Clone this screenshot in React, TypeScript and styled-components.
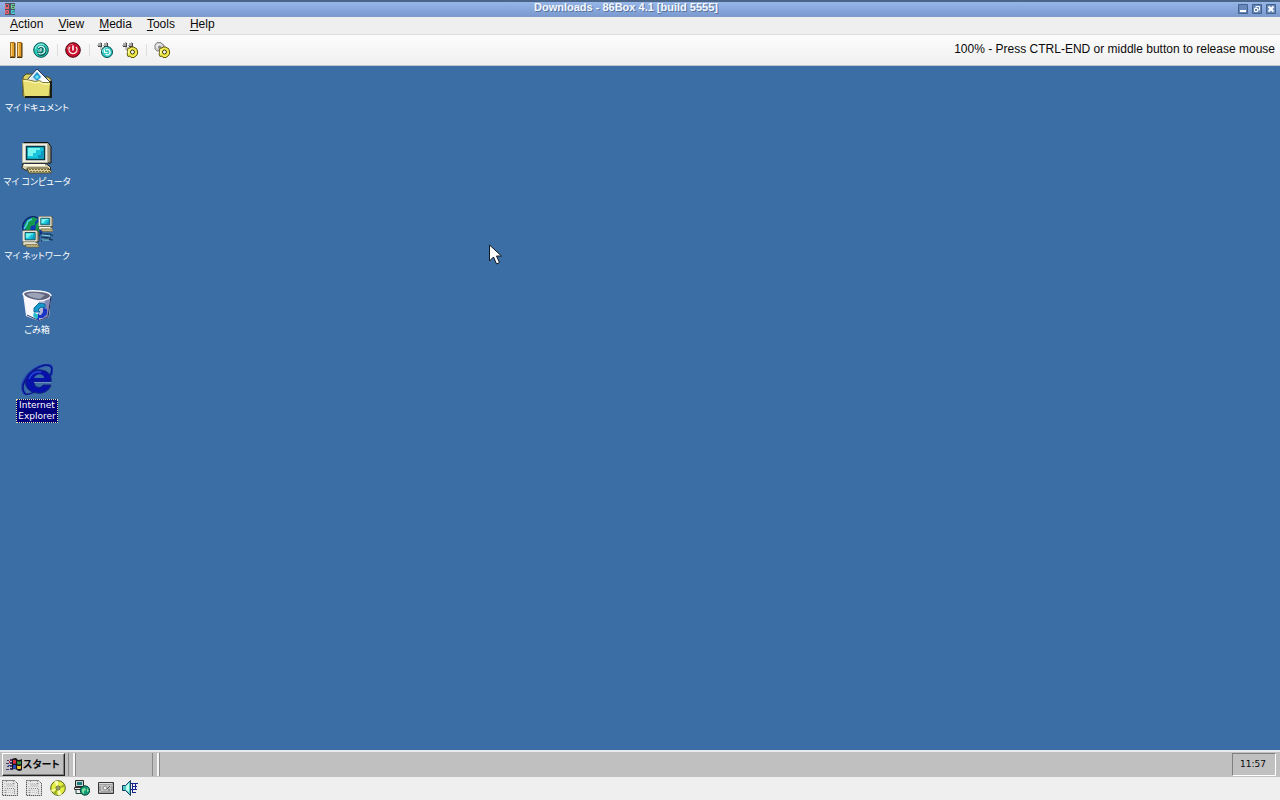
import React from "react";
import styled, { createGlobalStyle, css } from "styled-components";

const Global = createGlobalStyle`
  * { box-sizing: border-box; }
  body { margin: 0; font-family: "Liberation Sans", Arial, sans-serif; font-size: 12px; color: #0a0a0a; }
  button { font: inherit; color: inherit; border: 0; padding: 0; background: none; }
  svg { display: block; flex: none; }
`;

const jpFont = css`
  font-family: "Noto Sans CJK JP", sans-serif;
  font-feature-settings: "palt";
`;

const Page = styled.div`
  min-height: 100vh;
  display: flex;
  flex-direction: column;
  background: #efefef;
`;

const TitleBar = styled.header`
  height: 17px;
  display: grid;
  grid-template-columns: 48px 1fr 48px;
  align-items: center;
  padding: 0 4px;
  border-top: 2px solid #4a6588;
  border-bottom: 1px solid #7d9cc8;
  background: linear-gradient(#96b6e8, #7b9bd0);
`;

const Title = styled.h1`
  margin: 0;
  padding: 0 28px 3px 0;
  text-align: center;
  font-size: 11px;
  line-height: 11px;
  font-weight: bold;
  color: #f4f8ff;
  text-shadow: 1px 1px 0 #5873a0;
`;

const WindowButtons = styled.div`
  display: flex;
  justify-content: flex-end;
  gap: 4px;
`;

const WindowButton = styled.button`
  width: 10px;
  height: 10px;
`;

const MenuBar = styled.nav`
  height: 17px;
  display: flex;
  align-items: flex-start;
  gap: 15px;
  padding: 0 10px;
  background: #efefef;
`;

const MenuButton = styled.button`
  font-size: 12px;
  line-height: 14px;
  u { text-underline-offset: 2px; text-decoration-thickness: 1px; }
`;

const Toolbar = styled.div`
  height: 32px;
  display: flex;
  align-items: center;
  padding: 0 5px 0 8px;
  border-top: 1px solid #dcdcdc;
  border-bottom: 1px solid #c4c8cc;
  background: linear-gradient(#fcfcfc, #f0f0f0);
`;

const ToolGroup = styled.div`
  display: flex;
  gap: 9px;
`;

const ToolDivider = styled.span`
  width: 1px;
  height: 12px;
  margin: 0 7px 0 8px;
  background: #dedede;
`;

const IconButton = styled.button`
  width: 16px;
  height: 16px;
`;

const Hint = styled.span`
  margin-left: auto;
  padding-bottom: 2px;
  line-height: 14px;
`;

const Desktop = styled.main`
  flex: 1;
  position: relative;
  background: #3a6ea5;
`;

const IconColumn = styled.div`
  width: 74px;
  display: flex;
  flex-direction: column;
  gap: 14px;
  padding-top: 2px;
`;

const DesktopItem = styled.button`
  min-height: 60px;
  display: flex;
  flex-direction: column;
  align-items: center;
`;

const ItemLabel = styled.span<{ $selected?: boolean }>`
  ${jpFont}
  margin-top: 2px;
  font-size: 9px;
  line-height: 12px;
  color: #fff;
  white-space: nowrap;
  ${(p) => p.$selected && css`
    font-family: "DejaVu Sans", sans-serif;
    margin-top: 3px;
    line-height: 11px;
    padding: 0 1px;
    border: 1px dotted #e8e8a0;
    background: #00007c;
  `}
`;

const Pointer = styled.svg`
  position: absolute;
  left: 488px;
  top: 178px;
`;

const Taskbar = styled.footer`
  height: 27px;
  display: flex;
  align-items: stretch;
  padding: 1px 4px 1px 2px;
  border-top: 2px solid #e6eaee;
  background: #c0c0c0;
`;

const StartButton = styled.button`
  ${jpFont}
  width: 63px;
  display: flex;
  align-items: center;
  gap: 1px;
  padding: 0 0 2px 3px;
  font-size: 10px;
  line-height: 14px;
  font-weight: bold;
  border: 1px solid;
  border-color: #fff #222 #222 #fff;
  box-shadow: inset -1px -1px 0 #808080;
`;

const Grip = styled.span<{ $wide?: boolean }>`
  width: 7px;
  margin-left: ${(p) => (p.$wide ? "77px" : "3px")};
  border-left: 1px solid #8a8a8a;
  border-right: 2px solid #f6f6f6;
  box-shadow: 1px 0 0 #8a8a8a;
`;

const Clock = styled.time`
  width: 44px;
  margin-left: auto;
  padding-right: 2px;
  text-align: center;
  font-family: "DejaVu Sans", sans-serif;
  font-size: 9px;
  line-height: 21px;
  border: 1px solid;
  border-color: #808080 #fff #fff #808080;
`;

const StatusBar = styled.div`
  height: 23px;
  display: flex;
  gap: 8px;
  padding: 3px 2px 0;
`;

type Box = { children: React.ReactNode; size?: number };
const Svg = ({ children, size = 16 }: Box) => (
  <svg width={size} height={size} viewBox={`0 0 ${size} ${size}`} aria-hidden="true">{children}</svg>
);

const Logo = () => (
  <svg width="12" height="12" viewBox="0 0 12 12" aria-hidden="true">
    <path d="M1 0h10v12H1z" fill="#4a5568" />
    <g fill="none" strokeWidth="1">
      <path d="M1.500 1.500h3v3h-3zM1.500 5.500h3M4.500 4v2M1.500 4v2" stroke="#f0606c" />
      <path d="M10.500 1.500h-3v4h3v-2h-3" stroke="#6fd08b" />
      <path d="M1.500 7.500h3v3h-3zM1.500 9h3" stroke="#f0606c" />
      <path d="M10.500 7.500h-3v3h3V9h-3" stroke="#46d0dc" />
    </g>
  </svg>
);

const WinGlyph = ({ kind }: { kind: "min" | "max" | "close" }) => (
  <Svg size={10}>
    <path d="M.5.5h9v9h-9z" fill="#6687ba" stroke="#45628f" />
    {kind === "min" && <path d="M2 6h6v2H2z" fill="#fff" />}
    {kind === "max" && <path d="M4 4V2.5h3.500V6H6M2.500 4.500h3v3h-3z" fill="none" stroke="#fff" />}
    {kind === "close" && <path d="M2.500 2.500l5 5m0-5l-5 5" stroke="#fff" strokeWidth="2" />}
  </Svg>
);

const PauseIcon = () => (
  <Svg>
    <path d="M2.500.500h4v14h-4zM9.500.500h4v14h-4z" fill="#e3a12b" stroke="#a06c18" />
    <path d="M3.500 1v13M10.500 1v13" stroke="#f8cf70" />
    <path d="M2 15.500h5V1M9 15.500h5V1" fill="none" stroke="#4a3208" />
  </Svg>
);

const ResetIcon = () => (
  <Svg>
    <circle cx="8" cy="8" r="7.300" fill="#2ccabc" stroke="#08524e" />
    <path d="M2.500 7A5.500 5.500 0 0 1 11 3" fill="none" stroke="#a4f8ee" />
    <path d="M5 6.500a4 4 0 1 1 .500 5M4 9.500h4.500V6" fill="none" stroke="#075b55" strokeWidth="2.500" />
    <path d="M5 6a3.800 3.800 0 1 1 .500 5M4.500 9h3.500V6" fill="none" stroke="#d8fff8" strokeWidth="1.200" />
  </Svg>
);

const PowerIcon = () => (
  <Svg>
    <circle cx="8" cy="8" r="7.300" fill="#c70e2c" stroke="#4b0610" />
    <path d="M2.500 7A5.700 5.700 0 0 1 8 2.300" fill="none" stroke="#ef6074" />
    <path d="M5 5a4 4 0 1 0 6 0" fill="none" stroke="#ffe5e5" strokeWidth="1.400" />
    <path d="M8 3.500v5" stroke="#fff" strokeWidth="1.600" />
  </Svg>
);

const Keys = () => (
  <g>
    <path d="M1 1h4v4H1zM7 1h4v4H7z" fill="#444" />
    <path d="M0 0h4v4H0zM6 0h4v4H6z" fill="#a8a8a8" />
    <path d="M0 0h3v1H1v2H0zM6 0h3v1H7v2H6z" fill="#fff" />
    <path d="M3 5h4v3H3z" fill="#c4c4c4" />
  </g>
);

const CadIcon = () => (
  <Svg>
    <Keys />
    <circle cx="10" cy="10" r="5.500" fill="#30c8c4" stroke="#064f50" />
    <path d="M5.500 10A4.500 4.500 0 0 1 10 5.500" fill="none" stroke="#aaf6f0" />
    <path d="M7.500 7.500v3h3M8.500 12a2.600 2.600 0 1 0 .500-4" fill="none" stroke="#f0ffff" strokeWidth="1.200" />
  </Svg>
);

const Gear = () => (
  <>
    <path d="M9 5h3l1 1 1.500.500L15.500 9v3L14 14l-2 1.500H9L8 14l-2 .5L5 12l1-2-1-2 1.500-2H8z" fill="#f0e848" stroke="#5f5912" />
    <path d="M6.500 12V9L9 6.500" fill="none" stroke="#ffffb0" />
    <circle cx="10.500" cy="10" r="2" fill="#f8f8f0" stroke="#3b390c" />
  </>
);

const CaeIcon = () => (
  <Svg><Keys /><Gear /></Svg>
);

const SettingsIcon = () => (
  <Svg>
    <path d="M3 .500h4l1 1.500 2 1v4L8 9H3L1 7V3z" fill="#d0d0d0" stroke="#848484" />
    <path d="M3 6V3h4" fill="none" stroke="#fff" />
    <circle cx="5.500" cy="5" r="1.500" fill="#888" />
    <Gear />
  </Svg>
);

const FolderIcon = () => (
  <Svg size={32}>
    <path d="M2 28V9l3-3h8l2 3h12l3 2v17z" fill="#d9cf62" stroke="#4b481d" />
    <path d="M6 12L16 1l13 13-4 5H6z" fill="#f8fbff" stroke="#253856" />
    <path d="M9 11l7-8 5 6-7 5z" fill="#d2e6f4" />
    <path d="M16 4l4 5-4 4-4-4z" fill="#2292d0" />
    <path d="M14 8l3-1 1 3-3 1z" fill="#65e8ef" />
    <path d="M1.500 11.500h4l9 2 4-1 3 2h8L28 29H3z" fill="#e8df72" stroke="#817833" />
    <path d="M2.500 13h4l8 2 4-1 3 2h7" fill="none" stroke="#ffffc8" />
    <path d="M30 13v16H4" fill="none" stroke="#1b1c13" strokeWidth="2" />
  </Svg>
);

const Monitor = () => (
  <>
    <path d="M3 .500h24l3 4V21H4z" fill="#9b947c" stroke="#111" />
    <path d="M1.500 1.500h25v19h-25z" fill="#f1eee3" stroke="#b4b09e" />
    <path d="M5.500 4.500h18v13h-18z" fill="#18c4dc" stroke="#073940" strokeWidth="1.500" />
    <path d="M7 6h12v2h-4v3h-3v3H7z" fill="#76f4f0" />
    <path d="M17 16v-3h3v-4h2v7z" fill="#1096c4" />
    <path d="M1.500 22h24l4 3v3H4l-3-2z" fill="#d4cfb0" stroke="#27251a" />
    <path d="M3 23h21" stroke="#fffbe2" strokeWidth="2" />
    <path d="M6 26h21l4 4-3 1H8z" fill="#dacf9b" stroke="#514a2c" />
    <path d="M8 27.500h20M9 29.500h20" stroke="#746c42" strokeDasharray="2 1" />
  </>
);

const ComputerIcon = () => <Svg size={32}><Monitor /></Svg>;

const NetworkIcon = () => (
  <Svg size={32}>
    <circle cx="12" cy="11" r="10.500" fill="#1338b4" stroke="#0a2158" />
    <path d="M3 9l3-5 6-3 5 2-3 3v3l-4 1-1 5-3 1-2-4zM15 8l4-3 2 6-3 3 1 5-5-2z" fill="#14984c" />
    <path d="M3 13l3-5 1-3 4-2" fill="none" stroke="#4fcfe8" strokeWidth="1.500" />
    <path d="M21 18h8l3 2M20 21l10 1M20 25l5-2 7 1" fill="none" stroke="#102b48" />
    <path d="M21 19l8 1M21 24h7" stroke="#83d6de" />
    <g transform="translate(17 0) scale(.5)"><Monitor /></g>
    <g transform="translate(1 14) scale(.56)"><Monitor /></g>
  </Svg>
);

const TrashIcon = () => (
  <Svg size={32}>
    <path d="M2 4l3 22 13 5 10-4 2-21L15 11z" fill="#eeeef6" />
    <path d="M3 5l3 20 12 5V11z" fill="#f8f8fc" />
    <path d="M18 11l11-4-2 20-9 4z" fill="#b3b6d0" />
    <path d="M24 9l5-2-2 20-4 2z" fill="#858bb6" />
    <path d="M6 25l12 5.500 9-3.500" fill="none" stroke="#39406f" />
    <path d="M2 4Q4 0 16 1q14 1 14 5-2 4-12 5Q4 9 2 4z" fill="#60657d" stroke="#fafaff" strokeWidth="1.500" />
    <path d="M5 4q6-2 12-1l7 2-5 4Q9 8 5 4z" fill="#9ba1b6" />
    <path d="M30 6l-3 21" fill="none" stroke="#1f2550" />
    <path d="M13 18l5-5 6 1v4l-4-1-3 3 2 2h-6z" fill="#159bcb" stroke="#12659a" />
    <path d="M22 18l4 1v5l-4 4h-4v3l-4-4 4-4v2h2l2-3z" fill="#1c35c4" />
    <path d="M13 22l-1 4 3 3 2-1v-3z" fill="#29bdc6" />
  </Svg>
);

const ExplorerIcon = () => (
  <Svg size={32}>
    <path d="M4 30C-4 20 9 4 24 1c8-1 9 5 5 11" fill="none" stroke="#254bbb" strokeWidth="3" />
    <path d="M4 30C-3 21 10 4 24 1c8-1 8 5 5 11M4 30c5 1 10-2 14-5" fill="none" stroke="#07148a" strokeWidth="1.500" />
    <path d="M30 21C28 27 22 30 16 29 7 28 3 22 5 15 7 8 13 5 20 6c8 1 11 6 10 12H13c0 6 7 7 9 3z" fill="#0712a9" stroke="#14247d" />
    <path d="M13 14h10c0-5-8-5-10 0z" fill="#3a6ea5" />
    <path d="M13 18.500h17" stroke="#738bc1" />
    <path d="M8 15c2-5 6-8 12-7" fill="none" stroke="#2849d1" strokeWidth="1.500" />
  </Svg>
);

const WindowsFlag = () => (
  <svg width="16" height="14" viewBox="0 0 16 14" aria-hidden="true">
    <path d="M6 2q4-2 5 0t5 0v11q-3 2-5 0t-5 0z" fill="#141414" />
    <path d="M7 3q3-1 3 1v3q-1-1-3 0z" fill="#d72e42" />
    <path d="M11 4q2 1 4 0v3q-2 1-4 0z" fill="#369440" />
    <path d="M7 8q3-1 3 1v3q-1-1-3 0z" fill="#2b4dba" />
    <path d="M11 8.500q2 1 4 0v3q-2 1-4 0z" fill="#eac237" />
    <path d="M1 3h2v1H1zM4 2h2v2H4zM0 6h3v1H0zM4 5h2v2H4zM1 9h2v1H1zM4 8h2v2H4zM0 12h3v1H0zM4 11h2v2H4z" fill="#48356b" />
    <path d="M3 4h1v2H3z" fill="#d52f48" /><path d="M2 8h2v1H2z" fill="#3654bd" />
  </svg>
);

const FloppyIcon = () => (
  <Svg>
    <path d="M.500.500h12l3 3v12H.500z" fill="#e6e6e6" stroke="#222" strokeDasharray="1 1" />
    <path d="M4.500 1v4h7V1M3.500 15V8.500h9V15" fill="none" stroke="#8f8f8f" strokeDasharray="1 1" />
    <path d="M2 3.500h12M2 6.500h12M2 10.500h12M2 12.500h12" stroke="#c2c2c2" strokeDasharray="1 1" />
  </Svg>
);

const DiscIcon = () => (
  <Svg>
    <circle cx="8" cy="8" r="7.300" fill="#e2ed45" stroke="#56600f" />
    <path d="M8 8L4 1.500 8 .800zM8 8l4 6.500-4 .8zM8 8L1 10l1 2z" fill="#fbffad" />
    <path d="M8 8l6-4 1 3zM8 8l-5 5 3 2z" fill="#9caf28" />
    <circle cx="8" cy="8" r="2" fill="#eff0d8" stroke="#586017" />
    <circle cx="8" cy="8" r=".800" fill="#222" />
  </Svg>
);

const NetIcon = () => (
  <Svg>
    <path d="M1.500.500h8v6h-8z" fill="#cfd4c8" stroke="#252b28" />
    <path d="M3 2h5v3H3z" fill="#147b83" />
    <path d="M.500 7.500h9v2h-9z" fill="#e0e6e0" stroke="#333" />
    <path d="M2 10v3.500h6" fill="none" stroke="#1a4939" />
    <circle cx="11" cy="10.500" r="4.700" fill="#159774" stroke="#07443a" />
    <path d="M8 9l3-1 1 2-2 1v3l-2-2zM13 8l2 3-2 1z" fill="#81e2a0" />
  </Svg>
);

const DriveIcon = () => (
  <Svg>
    <path d="M.500 2.500h15v11H.500z" fill="#a2a2a2" stroke="#373737" />
    <path d="M1 3.500h13" stroke="#ddd" />
    <path d="M3 5h10v6H3z" fill="#c4c4c4" />
    <circle cx="7" cy="8" r="2" fill="#eee" stroke="#888" />
    <path d="M9 9l3-3M10 10h2" stroke="#555" />
    <path d="M2 5v1M14 5v1M2 11v1M14 11v1" stroke="#eee" />
  </Svg>
);

const SoundIcon = () => (
  <Svg>
    <path d="M.500 5.500h3l5-5v15l-5-5h-3z" fill="#52cbc2" stroke="#143f62" />
    <path d="M4 6l3-3v9l-3-2z" fill="#c1fff1" />
    <path d="M9 3.500h7M10 6.500h5M9 9.500h6M10 12.500h4M10.500 3v10M13.500 3v7" fill="none" stroke="#13258a" />
  </Svg>
);

const menus = ["Action", "View", "Media", "Tools", "Help"];

const toolGroups = [
  [{ name: "Pause", Icon: PauseIcon }, { name: "Hard reset", Icon: ResetIcon }],
  [{ name: "Shut down", Icon: PowerIcon }],
  [{ name: "Ctrl+Alt+Del", Icon: CadIcon }, { name: "Ctrl+Alt+Esc", Icon: CaeIcon }],
  [{ name: "Settings", Icon: SettingsIcon }],
];

const items = [
  { label: "マイ ドキュメント", Icon: FolderIcon },
  { label: "マイ コンピュータ", Icon: ComputerIcon },
  { label: "マイ ネットワーク", Icon: NetworkIcon },
  { label: "ごみ箱", Icon: TrashIcon },
];

const devices = [
  { name: "Floppy 1", Icon: FloppyIcon },
  { name: "Floppy 2", Icon: FloppyIcon },
  { name: "CD-ROM", Icon: DiscIcon },
  { name: "Network", Icon: NetIcon },
  { name: "Hard disk", Icon: DriveIcon },
  { name: "Sound", Icon: SoundIcon },
];

export default function App() {
  return (
    <Page>
      <Global />
      <TitleBar>
        <Logo />
        <Title>Downloads - 86Box 4.1 [build 5555]</Title>
        <WindowButtons>
          <WindowButton aria-label="Minimize"><WinGlyph kind="min" /></WindowButton>
          <WindowButton aria-label="Restore"><WinGlyph kind="max" /></WindowButton>
          <WindowButton aria-label="Close"><WinGlyph kind="close" /></WindowButton>
        </WindowButtons>
      </TitleBar>
      <MenuBar>
        {menus.map((m) => (
          <MenuButton key={m}><u>{m[0]}</u>{m.slice(1)}</MenuButton>
        ))}
      </MenuBar>
      <Toolbar>
        {toolGroups.map((group, i) => (
          <React.Fragment key={i}>
            {i > 0 && <ToolDivider />}
            <ToolGroup>
              {group.map(({ name, Icon }) => (
                <IconButton key={name} aria-label={name}><Icon /></IconButton>
              ))}
            </ToolGroup>
          </React.Fragment>
        ))}
        <Hint>100% - Press CTRL-END or middle button to release mouse</Hint>
      </Toolbar>
      <Desktop>
        <IconColumn>
          {items.map(({ label, Icon }) => (
            <DesktopItem key={label}>
              <Icon />
              <ItemLabel>{label}</ItemLabel>
            </DesktopItem>
          ))}
          <DesktopItem>
            <ExplorerIcon />
            <ItemLabel $selected>Internet<br />Explorer</ItemLabel>
          </DesktopItem>
        </IconColumn>
        <Pointer width="14" height="22" viewBox="0 0 14 22" aria-hidden="true">
          <path d="M1.500 1v16l4-4 3 7 3-1.500-3-6.500h5z" fill="#fff" stroke="#101820" />
        </Pointer>
      </Desktop>
      <Taskbar>
        <StartButton><WindowsFlag />スタート</StartButton>
        <Grip />
        <Grip $wide />
        <Clock>11:57</Clock>
      </Taskbar>
      <StatusBar>
        {devices.map(({ name, Icon }) => (
          <IconButton key={name} aria-label={name}><Icon /></IconButton>
        ))}
      </StatusBar>
    </Page>
  );
}
